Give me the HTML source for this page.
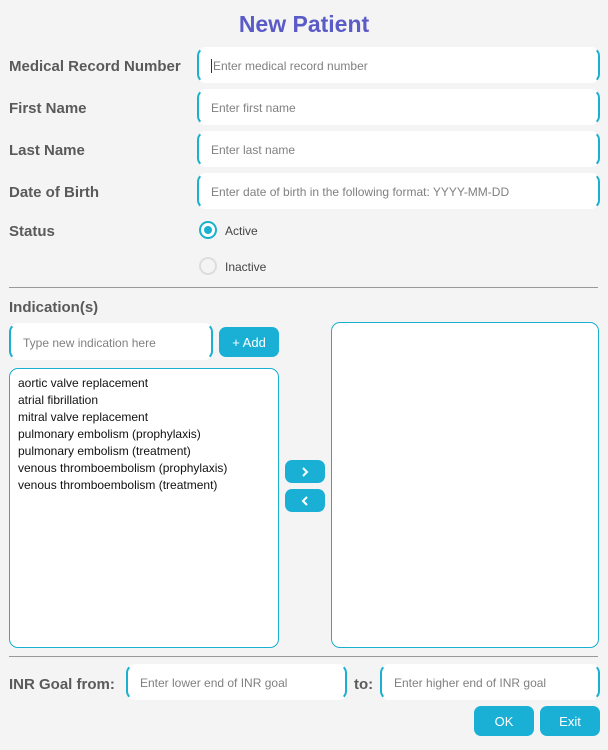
<!DOCTYPE html>
<html><head><meta charset="utf-8"><style>
body{margin:0;width:608px;height:750px;background:#f4f4f4;font-family:"Liberation Sans",sans-serif;position:relative;overflow:hidden}
.a{position:absolute}
.t{left:0;width:608px;text-align:center;top:11px;font-size:23px;font-weight:bold;color:#5b5bc8}
.l{left:9px;font-size:15px;font-weight:bold;color:#5a5a5a}
.in{position:absolute;background:#fff;border:2px solid #1ab0d0;border-top-color:#fff;border-bottom-color:#fff;border-radius:9px;box-sizing:border-box;font-size:12px;color:#808080;padding-left:12px;padding-top:2px;display:flex;align-items:center}
.btn{position:absolute;background:#1ab0d6;border-radius:7px;color:#fff;font-size:13px;display:flex;align-items:center;justify-content:center}
.hr{left:9px;width:589px;height:1px;background:#999}
.box{position:absolute;border:1px solid #1ab0d0;border-radius:9px;background:#fff;box-sizing:border-box}
.list{font-size:12px;color:#111;line-height:17px;padding:6px 8px}
</style></head><body>
<div class="a t">New Patient</div>
<div class="a l" style="top:58px">Medical Record Number</div>
<div class="in" style="left:197px;top:47px;width:403px;height:36px"><span style="border-left:1px solid #333;height:14px;margin-right:1px"></span>Enter medical record number</div>
<div class="a l" style="top:100px">First Name</div>
<div class="in" style="left:197px;top:89px;width:403px;height:36px">Enter first name</div>
<div class="a l" style="top:142px">Last Name</div>
<div class="in" style="left:197px;top:131px;width:403px;height:36px">Enter last name</div>
<div class="a l" style="top:184px">Date of Birth</div>
<div class="in" style="left:197px;top:173px;width:403px;height:36px">Enter date of birth in the following format: YYYY-MM-DD</div>
<div class="a l" style="top:223px">Status</div>
<div class="a" style="left:199px;top:221px;width:14px;height:14px;border:2px solid #1ab0d0;border-radius:50%;background:#fff"><div style="margin:3px;width:8px;height:8px;border-radius:50%;background:#1ab0d0"></div></div>
<div class="a" style="left:225px;top:224px;font-size:12px;color:#444">Active</div>
<div class="a" style="left:199px;top:257px;width:14px;height:14px;border:2px solid #ddd;border-radius:50%;background:#f4f4f4"></div>
<div class="a" style="left:225px;top:260px;font-size:12px;color:#444">Inactive</div>
<div class="a hr" style="top:287px"></div>
<div class="a l" style="top:299px">Indication(s)</div>
<div class="in" style="left:9px;top:323px;width:204px;height:37px">Type new indication here</div>
<div class="btn" style="left:219px;top:327px;width:60px;height:30px">+ Add</div>
<div class="box list" style="left:9px;top:368px;width:270px;height:280px">aortic valve replacement<br>atrial fibrillation<br>mitral valve replacement<br>pulmonary embolism (prophylaxis)<br>pulmonary embolism (treatment)<br>venous thromboembolism (prophylaxis)<br>venous thromboembolism (treatment)</div>
<div class="btn" style="left:285px;top:460px;width:40px;height:23px"><svg width="10" height="12" viewBox="0 0 10 12"><path d="M3 2 L7 6 L3 10" fill="none" stroke="#fff" stroke-width="2"/></svg></div>
<div class="btn" style="left:285px;top:489px;width:40px;height:23px"><svg width="10" height="12" viewBox="0 0 10 12"><path d="M7 2 L3 6 L7 10" fill="none" stroke="#fff" stroke-width="2"/></svg></div>
<div class="box" style="left:331px;top:322px;width:268px;height:326px"></div>
<div class="a hr" style="top:656px"></div>
<div class="a l" style="top:676px">INR Goal from:</div>
<div class="in" style="left:126px;top:664px;width:221px;height:36px">Enter lower end of INR goal</div>
<div class="a l" style="left:354px;top:676px">to:</div>
<div class="in" style="left:380px;top:664px;width:220px;height:36px">Enter higher end of INR goal</div>
<div class="btn" style="left:474px;top:706px;width:60px;height:30px">OK</div>
<div class="btn" style="left:540px;top:706px;width:60px;height:30px">Exit</div>
</body></html>
